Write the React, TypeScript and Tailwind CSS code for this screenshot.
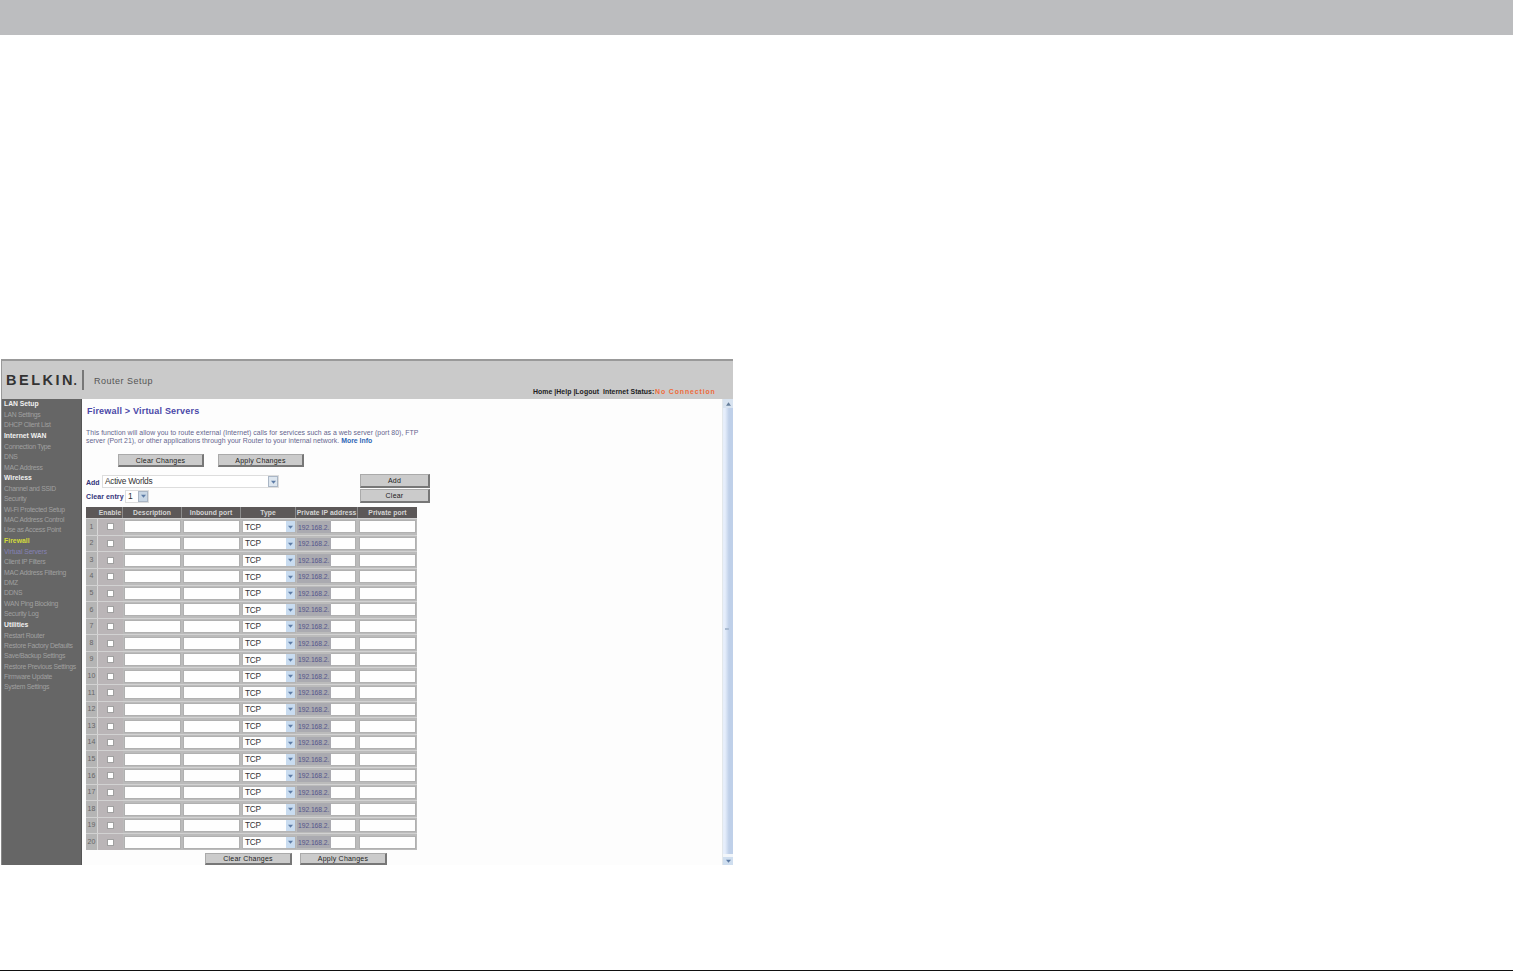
import React from "react";

type NavEntry = { label: string; kind?: "head" | "active" | "current" };

const nav: NavEntry[] = [
  { label: "LAN Setup", kind: "head" },
  { label: "LAN Settings" },
  { label: "DHCP Client List" },
  { label: "Internet WAN", kind: "head" },
  { label: "Connection Type" },
  { label: "DNS" },
  { label: "MAC Address" },
  { label: "Wireless", kind: "head" },
  { label: "Channel and SSID" },
  { label: "Security" },
  { label: "Wi-Fi Protected Setup" },
  { label: "MAC Address Control" },
  { label: "Use as Access Point" },
  { label: "Firewall", kind: "active" },
  { label: "Virtual Servers", kind: "current" },
  { label: "Client IP Filters" },
  { label: "MAC Address Filtering" },
  { label: "DMZ" },
  { label: "DDNS" },
  { label: "WAN Ping Blocking" },
  { label: "Security Log" },
  { label: "Utilities", kind: "head" },
  { label: "Restart Router" },
  { label: "Restore Factory Defaults" },
  { label: "Save/Backup Settings" },
  { label: "Restore Previous Settings" },
  { label: "Firmware Update" },
  { label: "System Settings" },
];

const navStyle = {
  head: "h-[11.2px] font-bold text-[#f0f0f0] tracking-[-0.02px]",
  active: "h-[11.2px] font-bold text-[#d3da3c] tracking-[0.05px]",
  current: "h-[10.35px] text-[#8581b5] tracking-[-0.1px]",
  item: "h-[10.35px] text-[#a0a0a0] tracking-[-0.27px]",
};

function Button({ children, className }: { children: React.ReactNode; className: string }) {
  return (
    <button
      className={
        "flex shrink-0 items-center justify-center border-t border-l border-r-2 border-b-2 border-t-[#aaa] border-l-[#aaa] border-r-[#777] border-b-[#777] bg-[#cbcbcb] text-[7px] leading-none tracking-[0.22px] text-[#222] " +
        className
      }
    >
      {children}
    </button>
  );
}

function Arrow({ className }: { className: string }) {
  return (
    <span className={"flex shrink-0 items-center justify-center " + className}>
      <svg viewBox="0 0 6 4" className="h-[4px] w-[5px]">
        <path d="M0 0.5h6L3 4z" fill="#5c7ba5" />
      </svg>
    </span>
  );
}

const columns = "grid grid-cols-[12px_25px_59px_59px_55px_62px_59px]";

function Row({ n }: { n: number }) {
  return (
    <div className={columns + " h-[16.6px] border-t border-[#d2d2d2] bg-[#bbb]"}>
      <div className="flex items-center justify-center border-r border-[#d8d8d8] bg-[#b5b5b5] text-[7px] text-[#666]">{n}</div>
      <div className="flex items-center justify-center bg-[#bab5b7]">
        <span className="h-[7px] w-[7px] border border-[#a0a0a0] bg-white" />
      </div>
      <div className="flex items-center px-[1px]">
        <span className="h-[13px] w-full border border-[#b0b0b0] bg-[#fefefe]" />
      </div>
      <div className="flex items-center px-[1px]">
        <span className="h-[13px] w-full border border-[#b0b0b0] bg-[#fefefe]" />
      </div>
      <div className="flex items-center pl-[1px]">
        <span className="flex h-[13px] w-full items-center justify-between border border-[#b4b4b4] bg-[#fefefe] pl-[2px] text-[8.3px] leading-none tracking-[-0.3px] text-[#333]">
          TCP
          <Arrow className="h-[11px] w-[9px] bg-[#c9dcf0]" />
        </span>
      </div>
      <div className="flex items-center pr-[2px] pl-[1px]">
        <span className="flex h-[12px] w-[34px] items-center overflow-hidden bg-[#aaaab0] pt-[2px] pl-px text-[6.8px] leading-none tracking-[-0.08px] whitespace-nowrap text-[#55558b]">
          192.168.2.
        </span>
        <span className="h-[13px] flex-1 border border-l-0 border-[#b0b0b0] bg-[#fefefe]" />
      </div>
      <div className="flex items-center pr-[1px] pl-[1px]">
        <span className="h-[13px] w-full border border-[#b0b0b0] bg-[#fefefe]" />
      </div>
    </div>
  );
}

export default function App() {
  return (
    <div className="flex h-[971px] w-[1513px] flex-col overflow-hidden bg-white font-['Liberation_Sans',sans-serif]">
      <div className="h-[35px] shrink-0 bg-[#bcbdbf]" />
      <div className="mt-[324px] ml-px flex h-[506px] w-[732px] shrink-0 flex-col overflow-hidden bg-[#fdfdfd]">
        <header className="flex h-[40px] shrink-0 border-t-2 border-l border-[#999] bg-[#cacaca]">
          <div className="mt-[9px] ml-[4px] flex h-[20px] w-[78px] shrink-0 items-center border-r-2 border-[#777] pt-px text-[14.5px] leading-none font-bold tracking-[2.5px] whitespace-nowrap text-[#333]">
            BELKIN<span className="-ml-[1.5px] text-[12px]">.</span>
          </div>
          <div className="mt-[15px] ml-[10px] w-[80px] text-[9px] leading-[10px] tracking-[0.5px] whitespace-nowrap text-[#555]">Router Setup</div>
          <div className="mt-[26px] ml-auto flex w-[200px] text-[6.9px] leading-[9px] whitespace-nowrap">
            <span className="w-[122px] font-bold tracking-[0.05px] whitespace-pre text-[#222]">Home |Help |Logout  Internet Status:</span>
            <span className="font-bold tracking-[0.9px] text-[#ef6b3b]">No Connection</span>
          </div>
        </header>

        <div className="flex min-h-0 flex-1">
          <nav className="flex w-[81px] shrink-0 flex-col border-r border-l border-r-[#555] border-l-[#888] bg-[#666] pl-[2px] text-[6.8px]">
            {nav.map((entry) => (
              <div key={entry.label} className={"flex shrink-0 items-center leading-none whitespace-nowrap " + navStyle[entry.kind ?? "item"]}>
                {entry.label}
              </div>
            ))}
          </nav>

          <main className="flex min-w-0 flex-1 flex-col pl-[4px]">
            <h1 className="mt-[7px] ml-px h-[11px] text-[9px] leading-[11px] font-bold tracking-[0.2px] text-[#4a48a8]">Firewall &gt; Virtual Servers</h1>
            <p className="mt-[12px] h-[17px] text-[6.9px] leading-[8px] tracking-[0.045px] whitespace-nowrap text-[#65658e]">
              <span className="block">This function will allow you to route external (Internet) calls for services such as a web server (port 80), FTP</span>
              <span className="block tracking-[0.01px]">
                server (Port 21), or other applications through your Router to your internal network. <b className="font-bold text-[#2d65b5]">More Info</b>
              </span>
            </p>
            <div className="mt-[9px] ml-[32px] flex gap-[14px]">
              <Button className="h-[13px] w-[86px]">Clear Changes</Button>
              <Button className="h-[13px] w-[86px]">Apply Changes</Button>
            </div>

            <div className="mt-[7px] flex h-[29px] w-[344px] justify-between">
              <div className="flex flex-col text-[7px] font-bold text-[#34347a]">
                <div className="flex h-[15px] items-center">
                  <span className="w-[16px] pt-[3px]">Add</span>
                  <span className="flex h-[13px] w-[177px] items-center justify-between border border-[#ddd] bg-white pl-[2px] text-[8.3px] leading-none font-normal tracking-[-0.25px] text-[#333]">
                    Active Worlds
                    <Arrow className="h-[11px] w-[10px] border border-[#aab6c5] bg-[#dde6ef]" />
                  </span>
                </div>
                <div className="flex h-[14px] items-center">
                  <span className="w-[39px] pt-[3px] tracking-[0.1px] whitespace-nowrap">Clear entry</span>
                  <span className="flex h-[13px] w-[24px] items-center justify-between border border-[#ddd] bg-white pl-[2px] text-[8.5px] leading-none font-normal text-[#333]">
                    1
                    <Arrow className="h-[11px] w-[10px] border border-[#aab6c5] bg-[#c9d7e5]" />
                  </span>
                </div>
              </div>
              <div className="flex flex-col gap-[1px]">
                <Button className="h-[14px] w-[70px]">Add</Button>
                <Button className="h-[14px] w-[70px]">Clear</Button>
              </div>
            </div>

            <section className="mt-[4px] w-[331px] shrink-0">
              <div className={columns + " h-[11px] bg-[#5c5858] text-center text-[6.8px] leading-[11px] font-bold tracking-[0.05px] whitespace-nowrap text-[#d4d4d4]"}>
                <span />
                <span className="border-r border-[#8b8b8b]">Enable</span>
                <span className="border-r border-[#8b8b8b]">Description</span>
                <span className="border-r border-[#8b8b8b]">Inbound port</span>
                <span className="border-r border-[#8b8b8b]">Type</span>
                <span className="border-r border-[#8b8b8b]">Private IP address</span>
                <span>Private port</span>
              </div>
              {Array.from({ length: 20 }, (_, i) => (
                <Row key={i} n={i + 1} />
              ))}
            </section>

            <div className="mt-[3px] ml-[119px] flex gap-[8px]">
              <Button className="h-[12px] w-[87px]">Clear Changes</Button>
              <Button className="h-[12px] w-[87px]">Apply Changes</Button>
            </div>
          </main>

          <aside className="flex w-[11px] shrink-0 flex-col border-l border-[#e3e8eb] bg-[#c2d2e8]">
            <div className="flex h-[9px] items-center justify-center bg-[#d8e3f0]">
              <svg viewBox="0 0 6 4" className="h-[4px] w-[5px]">
                <path d="M0 4h6L3 0z" fill="#667f9c" />
              </svg>
            </div>
            <div className="flex flex-1 items-center bg-linear-to-r from-[#e6eefb] from-20% to-[#bfd0e9] to-60% pb-[4px]">
              <span className="ml-[2px] h-[2px] w-[4px] bg-[#a9bbd2]" />
            </div>
            <div className="h-[3px] bg-[#f2f6fa]" />
            <Arrow className="h-[8px] bg-[#cfdeef]" />
          </aside>
        </div>
      </div>
      <div className="mt-auto h-px shrink-0 bg-[#111]" />
    </div>
  );
}
